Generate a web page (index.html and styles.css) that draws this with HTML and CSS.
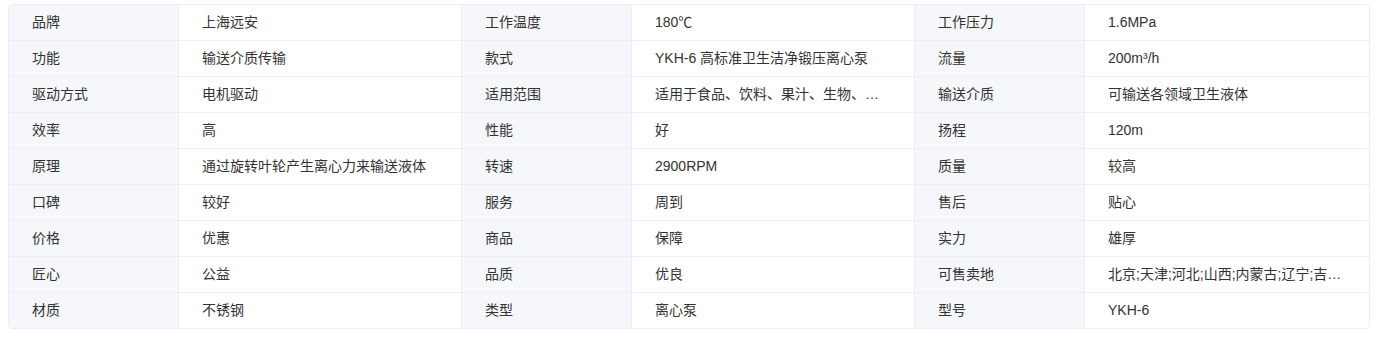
FILE: index.html
```html
<!DOCTYPE html>
<html lang="zh-CN">
<head>
<meta charset="utf-8">
<title>参数</title>
<link rel="stylesheet" href="styles.css">
</head>
<body>
<div class="specs">
  <div class="row">
    <div class="label">品牌</div><div class="value">上海远安</div>
    <div class="label">工作温度</div><div class="value">180℃</div>
    <div class="label">工作压力</div><div class="value last">1.6MPa</div>
  </div>
  <div class="row">
    <div class="label">功能</div><div class="value">输送介质传输</div>
    <div class="label">款式</div><div class="value">YKH-6 高标准卫生洁净锻压离心泵</div>
    <div class="label">流量</div><div class="value last">200m³/h</div>
  </div>
  <div class="row">
    <div class="label">驱动方式</div><div class="value">电机驱动</div>
    <div class="label">适用范围</div><div class="value">适用于食品、饮料、果汁、生物、…</div>
    <div class="label">输送介质</div><div class="value last">可输送各领域卫生液体</div>
  </div>
  <div class="row">
    <div class="label">效率</div><div class="value">高</div>
    <div class="label">性能</div><div class="value">好</div>
    <div class="label">扬程</div><div class="value last">120m</div>
  </div>
  <div class="row">
    <div class="label">原理</div><div class="value">通过旋转叶轮产生离心力来输送液体</div>
    <div class="label">转速</div><div class="value">2900RPM</div>
    <div class="label">质量</div><div class="value last">较高</div>
  </div>
  <div class="row">
    <div class="label">口碑</div><div class="value">较好</div>
    <div class="label">服务</div><div class="value">周到</div>
    <div class="label">售后</div><div class="value last">贴心</div>
  </div>
  <div class="row">
    <div class="label">价格</div><div class="value">优惠</div>
    <div class="label">商品</div><div class="value">保障</div>
    <div class="label">实力</div><div class="value last">雄厚</div>
  </div>
  <div class="row">
    <div class="label">匠心</div><div class="value">公益</div>
    <div class="label">品质</div><div class="value">优良</div>
    <div class="label">可售卖地</div><div class="value last">北京;天津;河北;山西;内蒙古;辽宁;吉…</div>
  </div>
  <div class="row">
    <div class="label">材质</div><div class="value">不锈钢</div>
    <div class="label">类型</div><div class="value">离心泵</div>
    <div class="label">型号</div><div class="value last">YKH-6</div>
  </div>
</div>
</body>
</html>
```

FILE: styles.css
```css
html, body {
  margin: 0;
  padding: 0;
  background: #ffffff;
}

body {
  padding: 4px 8px;
  font-family: "Liberation Sans", Arial, "Noto Sans CJK SC", sans-serif;
  font-size: 14px;
  color: #333333;
}

.specs {
  width: 1362px;
  box-sizing: border-box;
  border: 1px solid #ebeef5;
  border-radius: 4px;
  overflow: hidden;
}

.row {
  display: grid;
  grid-template-columns: 170px 283px 170px 283px 170px 284px;
  height: 36px;
  border-bottom: 1px solid #ebeef5;
  box-sizing: border-box;
}

.row:last-child {
  height: 35px;
  border-bottom: none;
}

.label,
.value {
  display: block;
  padding: 0 23px;
  line-height: 35px;
  border-right: 1px solid #ebeef5;
  min-width: 0;
  overflow: hidden;
  white-space: nowrap;
}

.label {
  background: #f5f7fa;
  color: #333333;
}

.value {
  background: #ffffff;
  text-overflow: ellipsis;
}

.value.last {
  border-right: none;
}
```
